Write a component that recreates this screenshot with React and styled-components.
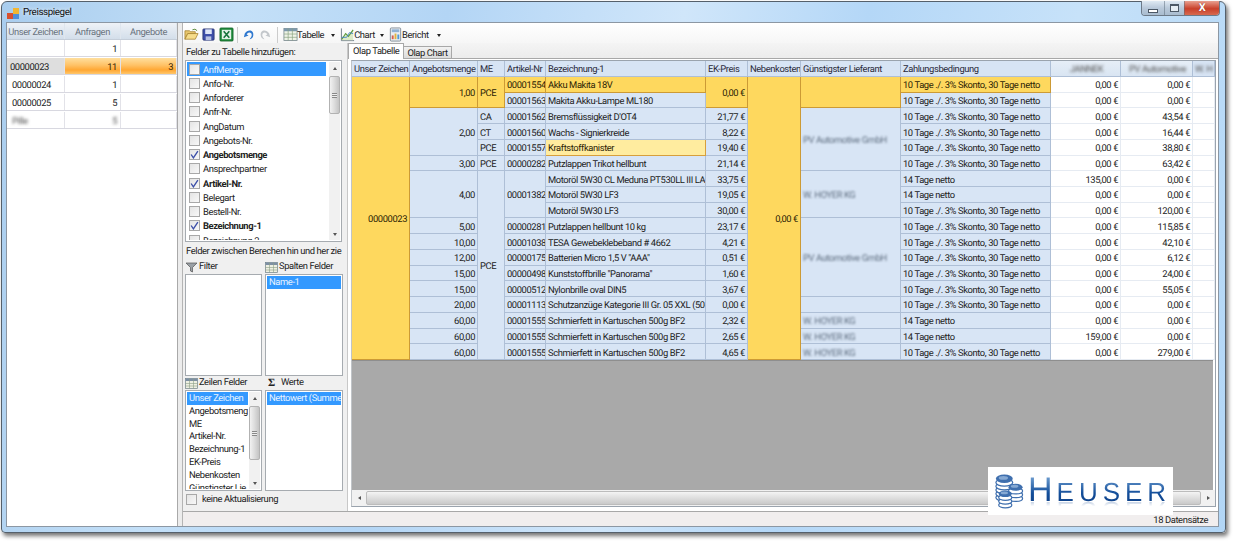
import React from 'react';
import styled, { createGlobalStyle } from 'styled-components';

const GlobalStyle = createGlobalStyle`
  html, body {
    margin: 0;
    padding: 0;
    background: #fff;
    overflow: hidden;
  }
  body {
    font-family: Roboto, "Liberation Sans", Arial, sans-serif;
    font-size: 9.4px;
    letter-spacing: -0.4px;
    text-rendering: geometricPrecision;
    color: #222;
  }
`;

const Page = styled.div`
  width: 1234px;
  height: 543px;
  padding: 1px 0 0 1px;
  box-sizing: border-box;
`;

const Window = styled.div`
  width: 1225px;
  height: 532px;
  box-sizing: border-box;
  display: flex;
  flex-direction: column;
  padding: 0 6px 5px 4px;
  border: 1px solid #55606b;
  border-radius: 6px 6px 4px 4px;
  background: linear-gradient(100deg, #a9cdee 0%, #c4e0f8 18%, #b3d5f5 34%, #d0e6fa 52%, #b4d7f7 66%, #c7e2f9 82%, #b2d6f6 100%);
  box-shadow: 2px 3px 4px rgba(0, 0, 0, 0.55);
`;

const TitleBar = styled.div`
  height: 20px;
  flex: none;
  display: flex;
  align-items: flex-start;
  gap: 3px;
`;

const TitleIcon = styled.svg`
  width: 13px;
  height: 13px;
  margin: 5px 0 0 1px;
`;

const TitleText = styled.span`
  font-size: 9.8px;
  line-height: 21px;
  color: #111;
  text-shadow: 0 0 4px #fff;
`;

const WindowControls = styled.div`
  margin-left: auto;
  margin-right: -1px;
  margin-top: -1px;
  height: 14px;
  display: flex;
  border: 1px solid #6d7a88;
  border-top: 0;
  border-radius: 0 0 4px 4px;
  overflow: hidden;
`;

const ControlButton = styled.div`
  width: ${p => p.$w}px;
  display: flex;
  align-items: center;
  justify-content: center;
  border-left: 1px solid rgba(90, 105, 120, 0.5);
  background: ${p => (p.$close
    ? 'linear-gradient(#e8a08f, #c9402a 55%, #d76a50)'
    : 'linear-gradient(#dfe9f3, #b9c9da 50%, #a9bccf)')};
  color: ${p => (p.$close ? '#fff' : '#445')};
  &:first-child {
    border-left: 0;
  }
`;

const MinGlyph = styled.div`
  width: 8px;
  height: 2px;
  margin-top: 5px;
  border: 1px solid #4c5866;
  background: #fff;
`;

const MaxGlyph = styled.div`
  width: 7px;
  height: 5px;
  border: 1px solid #4c5866;
  border-top-width: 2px;
  background: #e6edf4;
`;

const CloseGlyph = styled.span`
  font-size: 11px;
  font-weight: bold;
  line-height: 12px;
  text-shadow: 0 0 1px #6a1a10;
`;

const Client = styled.div`
  flex: 1;
  min-height: 0;
  display: flex;
  border: 1px solid #8c97a3;
  background: #f0f0f0;
`;

const LeftPanel = styled.div`
  width: 170px;
  flex: none;
  background: #fff;
  border-right: 1px solid #a9a9a9;
`;

const LeftHeader = styled.div`
  display: grid;
  grid-template-columns: 58px 56px 56px;
  height: 17px;
  box-sizing: border-box;
  background: linear-gradient(#eef2f7, #d3deea);
  border-bottom: 1px solid #c5ced9;
`;

const LeftHeaderCell = styled.div`
  display: flex;
  align-items: center;
  justify-content: center;
  padding-top: 2px;
  box-sizing: border-box;
  white-space: nowrap;
  color: #6a7480;
  border-right: 1px solid #dfe6ee;
`;

const LeftRow = styled.div`
  display: grid;
  grid-template-columns: 58px 56px 56px;
  height: 16px;
  margin-bottom: 2px;
  box-shadow: 0 1px 0 #d8d8e0;
`;

const LeftCell = styled.div`
  display: flex;
  align-items: center;
  justify-content: ${p => (p.$right ? 'flex-end' : 'flex-start')};
  padding: 2px 3px 0;
  overflow: hidden;
  border-right: 1px solid #e2e2e8;
  color: ${p => (p.$selected ? '#3a2500' : '#222')};
  background: ${p => {
    if (p.$key) return '#dedede';
    if (p.$selected) return 'linear-gradient(#ffdf9e, #ffc266 45%, #ffa733 75%, #ffc76c)';
    return '#fff';
  }};
  padding-left: ${p => (p.$key ? 3 : 5)}px;
`;

const Blurred = styled.span`
  filter: blur(${p => p.$r || 1.4}px);
  color: ${p => p.$color || '#555'};
  white-space: nowrap;
`;

const Splitter = styled.div`
  width: 4px;
  flex: none;
  background: #ececec;
  border-right: 1px solid #b4b4b4;
`;

const Main = styled.div`
  flex: 1;
  min-width: 0;
  display: flex;
  flex-direction: column;
`;

const Toolbar = styled.div`
  height: 20px;
  flex: none;
  display: flex;
  align-items: center;
  padding: 3px 0 0 1px;
  box-sizing: border-box;
  background: linear-gradient(#fff, #f6f6f6);
`;

const ToolIcon = styled.svg`
  width: 15px;
  height: 15px;
  flex: none;
  margin-right: ${p => p.$gap || 0}px;
`;

const ToolSep = styled.div`
  width: 1px;
  height: 16px;
  background: #ccc;
  margin: 0 ${p => p.$after}px 0 ${p => p.$before}px;
`;

const ToolLabel = styled.span`
  margin-left: -1px;
  padding-top: 1px;
`;

const Caret = styled.span`
  width: 0;
  height: 0;
  border: 2.5px solid transparent;
  border-top: 3px solid #222;
  border-bottom: 0;
  margin: 1px ${p => p.$after}px 0 ${p => p.$before}px;
`;

const Body = styled.div`
  flex: 1;
  min-height: 0;
  display: flex;
`;

const FieldPanel = styled.div`
  width: 165px;
  flex: none;
  box-sizing: border-box;
  padding: 2px 5px 0 2px;
  display: flex;
  flex-direction: column;
  background: #f0f0f0;
  border-right: 1px solid #c8c8c8;
`;

const FieldLabel = styled.div`
  height: ${p => p.$h || 15}px;
  line-height: ${p => (p.$h || 15) + 1}px;
  padding-left: 1px;
  white-space: nowrap;
  overflow: hidden;
  flex: none;
`;

const ListFrame = styled.div`
  height: ${p => p.$h}px;
  flex: none;
  box-sizing: border-box;
  display: flex;
  background: #fff;
  border: 1px solid #a6abb0;
  overflow: hidden;
  padding: 1px;
`;

const ListItems = styled.div`
  flex: 1;
  min-width: 0;
  overflow: hidden;
`;

const ListRow = styled.div`
  height: ${p => p.$h || 12.8}px;
  line-height: ${p => (p.$h || 12.8) + 2}px;
  padding-left: 2px;
  white-space: nowrap;
  overflow: hidden;
  color: ${p => (p.$selected ? '#e8f3ff' : '#222')};
  background: ${p => (p.$selected ? '#3399ff' : 'transparent')};
`;

const CheckRow = styled.div`
  height: 14.25px;
  display: flex;
  align-items: center;
  gap: 3px;
  padding-left: 2px;
  white-space: nowrap;
  font-weight: ${p => (p.$checked ? 'bold' : 'normal')};
  color: ${p => (p.$selected ? '#e8f3ff' : '#222')};
  background: ${p => (p.$selected ? '#3399ff' : 'transparent')};
`;

const CheckLabel = styled.span`
  padding-top: 2px;
`;

const CheckBox = styled.div`
  width: 9px;
  height: 9px;
  flex: none;
  display: flex;
  align-items: center;
  justify-content: center;
  border: 1px solid #a8a8a8;
  background: linear-gradient(135deg, #e4e4e4, #f8f8f8);
`;

const ScrollBar = styled.div`
  width: 11px;
  flex: none;
  display: flex;
  flex-direction: column;
  background: #f1f1f1;
  margin-left: ${p => p.$gap || 0}px;
`;

const ScrollArrow = styled.div`
  height: 12px;
  flex: none;
  display: flex;
  align-items: center;
  justify-content: center;
  margin-top: ${p => (p.$down ? 'auto' : 0)};
  &::before {
    content: '';
    border: 2.5px solid transparent;
    ${p => (p.$down ? 'border-top: 3px solid #555; border-bottom: 0;' : 'border-bottom: 3px solid #555; border-top: 0;')}
  }
`;

const ScrollThumb = styled.div`
  height: ${p => p.$h}px;
  margin-top: ${p => p.$top}px;
  flex: none;
  box-sizing: border-box;
  border: 1px solid #b2b2b2;
  border-radius: 2px;
  background: linear-gradient(90deg, #f2f2f2, #dcdcdc 50%, #c4c4c4);
  display: flex;
  align-items: center;
  justify-content: center;
  &::after {
    content: '';
    width: 5px;
    height: 5px;
    background: repeating-linear-gradient(#888 0 1px, #eee 1px 2px);
  }
`;

const PairGrid = styled.div`
  display: grid;
  grid-template-columns: 77px 78px;
  column-gap: 3px;
  flex: none;
`;

const Caption = styled.div`
  height: 14px;
  display: flex;
  align-items: center;
  gap: 1px;
  line-height: 16px;
  white-space: nowrap;
`;

const CaptionIcon = styled.svg`
  width: 13px;
  height: 11px;
  flex: none;
`;

const Sigma = styled.span`
  width: 13px;
  text-align: center;
  font-weight: bold;
  font-size: 11px;
  font-family: "Liberation Serif", serif;
  margin-right: 2px;
`;

const FooterCheck = styled.div`
  height: 16px;
  display: flex;
  align-items: center;
  gap: 5px;
  padding-left: 1px;
`;

const TabArea = styled.div`
  flex: 1;
  min-width: 0;
  display: flex;
  flex-direction: column;
  background: #fff;
`;

const TabStrip = styled.div`
  height: 16px;
  flex: none;
  box-sizing: border-box;
  display: flex;
  align-items: flex-end;
  background: linear-gradient(#f4f4f4, #ececec);
  border-bottom: 1px solid #a8a8a8;
`;

const Tab = styled.div`
  height: ${p => (p.$active ? 16 : 13)}px;
  line-height: ${p => (p.$active ? 15 : 14)}px;
  padding: 0 ${p => (p.$active ? 4 : 3)}px;
  margin-bottom: -1px;
  box-sizing: border-box;
  border: 1px solid #a8a8a8;
  border-bottom: ${p => (p.$active ? '0' : '1px solid #a8a8a8')};
  border-left-width: ${p => (p.$active ? 1 : 0)}px;
  background: ${p => (p.$active ? '#fff' : 'linear-gradient(#f2f2f2, #dcdcdc)')};
`;

const TablePanel = styled.div`
  flex: 1;
  min-height: 0;
  position: relative;
  padding: 1px 2px 4px 3px;
`;

const TableFrame = styled.div`
  height: 100%;
  box-sizing: border-box;
  display: flex;
  flex-direction: column;
  border: 1px solid #9aa3ad;
  border-left-color: #c0c4c8;
`;

const Grid = styled.div`
  display: grid;
  flex: none;
  grid-template-columns: 58px 68px 27px 41px 160px 42px 53px 100px 150px 70px 72px 22px;
  grid-template-rows: 16px repeat(18, 15.72px);
  background: #fff;
  width: 863px;
`;

const HeadCell = styled.div`
  grid-column: ${p => p.$col};
  grid-row: 1;
  display: flex;
  align-items: center;
  justify-content: ${p => (p.$center ? 'center' : 'flex-start')};
  padding: 2px 0 0 2px;
  white-space: nowrap;
  overflow: hidden;
  box-sizing: border-box;
  color: #2a2a3a;
  background: ${p => (p.$center ? 'linear-gradient(#e6eef7, #d9e5f2)' : '#d7e4f4')};
  border-right: 1px solid #aebfd6;
  border-bottom: 1px solid #aebfd6;
`;

const tones = {
  blue: { bg: '#d8e5f5', line: '#aebfd6', color: '#222' },
  yellow: { bg: '#fed85e', line: '#cc9a35', color: '#2c2305' },
  pale: { bg: '#ffec9f', line: '#d79f3c', color: '#2c2305' },
  white: { bg: '#fff', line: '#e6ebf2', color: '#222' },
};

const Cell = styled.div`
  grid-column: ${p => p.$col};
  grid-row: ${p => p.$row + 1} / span ${p => p.$span || 1};
  display: flex;
  align-items: center;
  justify-content: ${p => (p.$right ? 'flex-end' : 'flex-start')};
  padding: 3px ${p => (p.$right ? 2 : 0)}px 0 ${p => (p.$right ? 0 : 2)}px;
  box-sizing: border-box;
  white-space: nowrap;
  overflow: hidden;
  min-width: 0;
  color: ${p => tones[p.$tone || 'blue'].color};
  background: ${p => tones[p.$tone || 'blue'].bg};
  border-right: 1px solid ${p => tones[p.$tone || 'blue'].line};
  border-bottom: 1px solid ${p => tones[p.$tone || 'blue'].line};
`;

const Gray = styled.div`
  flex: 1;
  min-height: 0;
  margin-right: 2px;
  background: #a9a9a9;
  border-top: 1px solid #8e8e8e;
`;

const HScroll = styled.div`
  height: 16px;
  flex: none;
  display: flex;
  align-items: center;
  background: #f1f1f1;
`;

const HArrow = styled.div`
  width: 14px;
  height: 100%;
  flex: none;
  display: flex;
  align-items: center;
  justify-content: center;
  &::before {
    content: '';
    border: 2.5px solid transparent;
    ${p => (p.$right ? 'border-left: 3px solid #555; border-right: 0;' : 'border-right: 3px solid #555; border-left: 0;')}
  }
`;

const HThumb = styled.div`
  flex: 1;
  height: 14px;
  box-sizing: border-box;
  border: 1px solid #bcbcbc;
  border-radius: 2px;
  background: linear-gradient(#f4f4f4, #dedede 50%, #c9c9c9);
`;

const StatusBar = styled.div`
  height: 15px;
  flex: none;
  box-sizing: border-box;
  display: flex;
  align-items: center;
  justify-content: flex-end;
  padding: 3px 10px 0 0;
  background: #f1eeee;
  border-top: 1px solid #a8a8a8;
`;

const Logo = styled.div`
  position: absolute;
  left: 640px;
  bottom: -4px;
  width: 185px;
  height: 48px;
  display: flex;
  align-items: center;
  gap: 4px;
  padding-left: 6px;
  box-sizing: border-box;
  background: #fff;
`;

const LogoMark = styled.svg`
  width: 30px;
  height: 36px;
  flex: none;
`;

const LogoText = styled.div`
  display: flex;
  align-items: baseline;
  height: 30px;
  margin-top: -2px;
  font-family: "Liberation Sans", Arial, sans-serif;
  letter-spacing: 0;
  color: #1b559c;
  background: linear-gradient(#6f9ed0 5%, #144f9b 60%, #0d3f86);
  -webkit-background-clip: text;
  background-clip: text;
  -webkit-text-fill-color: transparent;
  -webkit-box-reflect: below -7px linear-gradient(transparent 72%, rgba(255, 255, 255, 0.45));
`;

const LogoBig = styled.span`
  font-size: 34px;
  line-height: 30px;
  letter-spacing: 4px;
`;

const LogoSmall = styled.span`
  font-size: 26px;
  line-height: 30px;
  letter-spacing: 5px;
`;

const TICK = 'M1 4 L3 7 L7 1';

const Tick = () => (
  <svg width="9" height="9" viewBox="0 0 8 8">
    <path d={TICK} fill="none" stroke="#3c4fa8" strokeWidth="1.2" />
  </svg>
);

const FolderIcon = () => (
  <ToolIcon viewBox="0 0 16 16" $gap={2}>
    <path d="M1 13 V4 H6 L7 5 H12 V7 H4 Z" fill="#e8c66e" stroke="#a47f2a" strokeWidth="0.8" />
    <path d="M1 13 L4 7 H15 L12 13 Z" fill="#f6dc8a" stroke="#a47f2a" strokeWidth="0.8" />
    <path d="M9 3 Q12 1 14 4" fill="none" stroke="#5a8a3a" strokeWidth="1" />
  </ToolIcon>
);

const SaveIcon = () => (
  <ToolIcon viewBox="0 0 16 16" $gap={3}>
    <rect x="2" y="2" width="12" height="12" rx="1" fill="#3d4ea8" stroke="#26316e" strokeWidth="0.8" />
    <rect x="4.5" y="2.5" width="7" height="5" fill="#dfe6f7" />
    <rect x="5" y="10" width="6" height="4" fill="#b9c2e2" />
  </ToolIcon>
);

const ExcelIcon = () => (
  <ToolIcon viewBox="0 0 16 16">
    <rect x="1" y="1" width="14" height="14" rx="1" fill="#1f8a3c" stroke="#136127" strokeWidth="0.8" />
    <rect x="3" y="3" width="10" height="10" fill="#e4f2e6" />
    <path d="M5 4.5 L11 11.5 M11 4.5 L5 11.5" stroke="#16743a" strokeWidth="1.7" />
  </ToolIcon>
);

const UndoIcon = () => (
  <ToolIcon viewBox="0 0 16 16">
    <path d="M3 7 C6 2 13 3 12 9 C12 11 10 13 8 13 C10 11 11 9 10 7 C8 5 6 6 5 8 L7 9 L2 11 Z" fill="#2f78cf" />
  </ToolIcon>
);

const RedoIcon = () => (
  <ToolIcon viewBox="0 0 16 16">
    <path d="M13 7 C10 2 3 3 4 9 C4 11 6 13 8 13 C6 11 5 9 6 7 C8 5 10 6 11 8 L9 9 L14 11 Z" fill="#c3c7cb" />
  </ToolIcon>
);

const TableIcon = () => (
  <ToolIcon viewBox="0 0 16 16">
    <rect x="1" y="1.5" width="14" height="13" fill="#eef3e6" stroke="#6f7f86" strokeWidth="0.8" />
    <rect x="1" y="1.5" width="14" height="3" fill="#7d99ad" />
    <path d="M5.5 1.5 V14.5 M10 1.5 V14.5 M1 7.5 H15 M1 11 H15" stroke="#86a07e" strokeWidth="0.7" />
  </ToolIcon>
);

const ChartIcon = () => (
  <ToolIcon viewBox="0 0 16 16">
    <path d="M1.5 1.5 V14.5 H15" fill="none" stroke="#6d7a88" strokeWidth="1" />
    <path d="M2 13 L6 7 L9 10 L14 3 V14 H2 Z" fill="#dcebc8" />
    <path d="M2 13 L6 7 L9 10 L14 3" fill="none" stroke="#5c9a3a" strokeWidth="1.2" />
    <path d="M2 11 L7 11 L10 6 L14 7" fill="none" stroke="#3d7fc4" strokeWidth="0.9" />
  </ToolIcon>
);

const ReportIcon = () => (
  <ToolIcon viewBox="0 0 16 16">
    <rect x="2.5" y="1" width="11" height="14" rx="1" fill="#e9eef2" stroke="#77838e" strokeWidth="0.9" />
    <rect x="4" y="2.5" width="8" height="3" fill="#8fb2d4" />
    <rect x="4" y="9" width="2" height="4" fill="#d65f4d" />
    <rect x="7" y="7" width="2" height="6" fill="#e2b43f" />
    <rect x="10" y="8" width="2" height="5" fill="#4f9bd6" />
  </ToolIcon>
);

const FunnelIcon = () => (
  <CaptionIcon viewBox="0 0 13 11">
    <path d="M1 1 H12 L7.5 5.5 V10 L5.5 9 V5.5 Z" fill="#9aa0a6" stroke="#555" strokeWidth="0.7" />
  </CaptionIcon>
);

const GridIcon = () => (
  <CaptionIcon viewBox="0 0 13 11">
    <rect x="0.5" y="0.5" width="12" height="10" fill="#eef0e2" stroke="#6f7f86" strokeWidth="0.7" />
    <rect x="0.5" y="0.5" width="12" height="2.5" fill="#7d8fa3" />
    <path d="M4.5 0.5 V10.5 M8.5 0.5 V10.5 M0.5 5.5 H12.5 M0.5 8 H12.5" stroke="#8da088" strokeWidth="0.6" />
  </CaptionIcon>
);

const Coins = ({ cx, cy, rx, layers }) => (
  <g>
    {Array.from({ length: layers }, (_, i) => (
      <ellipse
        key={i}
        cx={cx}
        cy={cy + (layers - i) * 4}
        rx={rx}
        ry={rx * 0.42}
        fill="#fff"
        stroke="#3f6fae"
        strokeWidth="1.3"
      />
    ))}
    <ellipse cx={cx} cy={cy} rx={rx} ry={rx * 0.5} fill="#3f6fae" />
    <ellipse cx={cx - 1} cy={cy - 1} rx={rx * 0.55} ry={rx * 0.22} fill="#86a9d3" />
  </g>
);

const HeuserMark = () => (
  <LogoMark viewBox="0 0 32 38">
    <Coins cx={11} cy={6} rx={9} layers={5} />
    <Coins cx={23} cy={15} rx={7.5} layers={3} />
    <Coins cx={12} cy={22} rx={7} layers={3} />
  </LogoMark>
);

const leftRows = [
  { code: '', requests: '1', offers: '' },
  { code: '00000023', requests: '11', offers: '3', selected: true },
  { code: '00000024', requests: '1', offers: '' },
  { code: '00000025', requests: '5', offers: '' },
  { code: 'Pille', requests: '5', offers: '', blurred: true },
];

const checkFields = [
  ['AnfMenge', false, true],
  ['Anfo-Nr.'],
  ['Anforderer'],
  ['Anfr-Nr.'],
  ['AngDatum'],
  ['Angebots-Nr.'],
  ['Angebotsmenge', true],
  ['Ansprechpartner'],
  ['Artikel-Nr.', true],
  ['Belegart'],
  ['Bestell-Nr.'],
  ['Bezeichnung-1', true],
  ['Bezeichnung-2'],
];

const rowFields = ['Unser Zeichen', 'Angebotsmeng', 'ME', 'Artikel-Nr.', 'Bezeichnung-1', 'EK-Preis', 'Nebenkosten', 'Günstigster Lie'];

const headers = ['Unser Zeichen', 'Angebotsmenge', 'ME', 'Artikel-Nr', 'Bezeichnung-1', 'EK-Preis', 'Nebenkosten', 'Günstigster Lieferant', 'Zahlungsbedingung'];

const SKONTO = '10 Tage ./. 3% Skonto, 30 Tage netto';
const NETTO = '14 Tage netto';

const amounts = [
  ['1,00', 1, 2, 'yellow'], ['2,00', 3, 3], ['3,00', 6, 1], ['4,00', 7, 3], ['5,00', 10, 1], ['10,00', 11, 1],
  ['12,00', 12, 1], ['15,00', 13, 1], ['15,00', 14, 1], ['20,00', 15, 1], ['60,00', 16, 1], ['60,00', 17, 1], ['60,00', 18, 1],
];

const units = [['PCE', 1, 2, 'yellow'], ['CA', 3, 1], ['CT', 4, 1], ['PCE', 5, 1], ['PCE', 6, 1], ['PCE', 7, 12]];

const articles = [
  ['00001554', 1, 1, 'yellow'], ['00001563', 2, 1], ['00001562', 3, 1], ['00001560', 4, 1], ['00001557', 5, 1], ['00000282', 6, 1],
  ['00001382', 7, 3], ['00000281', 10, 1], ['00001038', 11, 1], ['00000175', 12, 1], ['00000498', 13, 1], ['00000512', 14, 1],
  ['00001113', 15, 1], ['00001555', 16, 1], ['00001555', 17, 1], ['00001555', 18, 1],
];

const names = [
  ['Akku Makita 18V', 'yellow'], ['Makita Akku-Lampe ML180'], ['Bremsflüssigkeit D\'OT4'], ['Wachs - Signierkreide'],
  ['Kraftstoffkanister', 'pale'], ['Putzlappen Trikot hellbunt'], ['Motoröl 5W30 CL Meduna PT530LL III LA'], ['Motoröl 5W30 LF3'],
  ['Motoröl 5W30 LF3'], ['Putzlappen hellbunt 10 kg'], ['TESA Gewebeklebeband # 4662'], ['Batterien Micro 1,5 V "AAA"'],
  ['Kunststoffbrille "Panorama"'], ['Nylonbrille oval DIN5'], ['Schutzanzüge Kategorie III Gr. 05 XXL (50-'],
  ['Schmierfett in Kartuschen 500g BF2'], ['Schmierfett in Kartuschen 500g BF2'], ['Schmierfett in Kartuschen 500g BF2'],
];

const prices = [
  ['0,00 €', 1, 2, 'yellow'], ['21,77 €', 3, 1], ['8,22 €', 4, 1], ['19,40 €', 5, 1], ['21,14 €', 6, 1], ['33,75 €', 7, 1],
  ['19,05 €', 8, 1], ['30,00 €', 9, 1], ['23,17 €', 10, 1], ['4,21 €', 11, 1], ['0,51 €', 12, 1], ['1,60 €', 13, 1],
  ['3,67 €', 14, 1], ['0,00 €', 15, 1], ['2,32 €', 16, 1], ['2,65 €', 17, 1], ['4,65 €', 18, 1],
];

const suppliers = [
  ['', 1, 2, 'yellow'], ['PV Automotive GmbH', 3, 4], ['W. HOYER KG', 7, 3], ['PV Automotive GmbH', 10, 5], ['', 15, 1],
  ['W. HOYER KG', 16, 1], ['W. HOYER KG', 17, 1], ['W. HOYER KG', 18, 1],
];

const terms = [
  SKONTO, SKONTO, SKONTO, SKONTO, SKONTO, SKONTO, NETTO, NETTO, SKONTO, SKONTO, SKONTO, SKONTO, SKONTO, SKONTO, SKONTO, NETTO, NETTO, SKONTO,
];

const firstVendor = ['0,00', '0,00', '0,00', '0,00', '0,00', '0,00', '135,00', '0,00', '0,00', '0,00', '0,00', '0,00', '0,00', '0,00', '0,00', '0,00', '159,00', '0,00'];
const secondVendor = ['0,00', '0,00', '43,54', '16,44', '38,80', '63,42', '0,00', '0,00', '120,00', '115,85', '42,10', '6,12', '24,00', '55,05', '0,00', '0,00', '0,00', '279,00'];

const PivotGrid = () => (
  <Grid>
    {headers.map((label, i) => (
      <HeadCell key={label} $col={i + 1}>{label}</HeadCell>
    ))}
    <HeadCell $col={10} $center><Blurred $r={1.5}>JANNEK</Blurred></HeadCell>
    <HeadCell $col={11} $center><Blurred $r={1.5}>PV Automotive</Blurred></HeadCell>
    <HeadCell $col={12}><Blurred $r={1.5}>W. H</Blurred></HeadCell>

    <Cell $col={1} $row={1} $span={18} $tone="yellow" $right>00000023</Cell>
    {amounts.map(([value, row, span, tone]) => (
      <Cell key={row} $col={2} $row={row} $span={span} $tone={tone} $right>{value}</Cell>
    ))}
    {units.map(([value, row, span, tone]) => (
      <Cell key={row} $col={3} $row={row} $span={span} $tone={tone}>{value}</Cell>
    ))}
    {articles.map(([value, row, span, tone]) => (
      <Cell key={row} $col={4} $row={row} $span={span} $tone={tone}>{value}</Cell>
    ))}
    {names.map(([value, tone], i) => (
      <Cell key={i} $col={5} $row={i + 1} $tone={tone}>{value}</Cell>
    ))}
    {prices.map(([value, row, span, tone]) => (
      <Cell key={row} $col={6} $row={row} $span={span} $tone={tone} $right>{value}</Cell>
    ))}
    <Cell $col={7} $row={1} $span={18} $tone="yellow" $right>0,00 €</Cell>
    {suppliers.map(([value, row, span, tone]) => (
      <Cell key={row} $col={8} $row={row} $span={span} $tone={tone}>
        {value && <Blurred $r={1.3} $color="#5f6e80">{value}</Blurred>}
      </Cell>
    ))}
    {terms.map((value, i) => (
      <Cell key={i} $col={9} $row={i + 1} $tone={i === 0 ? 'yellow' : 'blue'}>{value}</Cell>
    ))}
    {firstVendor.map((value, i) => (
      <Cell key={i} $col={10} $row={i + 1} $tone="white" $right>{value} €</Cell>
    ))}
    {secondVendor.map((value, i) => (
      <Cell key={i} $col={11} $row={i + 1} $tone="white" $right>{value} €</Cell>
    ))}
    {terms.map((_, i) => (
      <Cell key={i} $col={12} $row={i + 1} $tone="white" />
    ))}
  </Grid>
);

const App = () => (
  <Page>
    <GlobalStyle />
    <Window>
      <TitleBar>
        <TitleIcon viewBox="0 0 13 13">
          <rect x="0" y="6" width="6" height="6" fill="#d8502f" />
          <rect x="6" y="1" width="6" height="6" fill="#f2b632" />
          <rect x="6" y="7" width="6" height="5" fill="#4f8fd8" />
        </TitleIcon>
        <TitleText>Preisspiegel</TitleText>
        <WindowControls>
          <ControlButton $w={22}><MinGlyph /></ControlButton>
          <ControlButton $w={19}><MaxGlyph /></ControlButton>
          <ControlButton $w={34} $close><CloseGlyph>X</CloseGlyph></ControlButton>
        </WindowControls>
      </TitleBar>
      <Client>
        <LeftPanel>
          <LeftHeader>
            <LeftHeaderCell>Unser Zeichen</LeftHeaderCell>
            <LeftHeaderCell>Anfragen</LeftHeaderCell>
            <LeftHeaderCell>Angebote</LeftHeaderCell>
          </LeftHeader>
          {leftRows.map(row => (
            <LeftRow key={row.code + row.requests}>
              <LeftCell $key={row.selected}>
                {row.blurred ? <Blurred>{row.code}</Blurred> : row.code}
              </LeftCell>
              <LeftCell $right $selected={row.selected}>
                {row.blurred ? <Blurred>{row.requests}</Blurred> : row.requests}
              </LeftCell>
              <LeftCell $right $selected={row.selected}>{row.offers}</LeftCell>
            </LeftRow>
          ))}
        </LeftPanel>
        <Splitter />
        <Main>
          <Toolbar>
            <FolderIcon />
            <SaveIcon />
            <ExcelIcon />
            <ToolSep $before={3} $after={4} />
            <UndoIcon />
            <RedoIcon />
            <ToolSep $before={5} $after={5} />
            <TableIcon />
            <ToolLabel>Tabelle</ToolLabel>
            <Caret $before={7} $after={5} />
            <ChartIcon />
            <ToolLabel>Chart</ToolLabel>
            <Caret $before={5} $after={4} />
            <ReportIcon />
            <ToolLabel>Bericht</ToolLabel>
            <Caret $before={8} $after={0} />
          </Toolbar>
          <Body>
            <FieldPanel>
              <FieldLabel>Felder zu Tabelle hinzufügen:</FieldLabel>
              <ListFrame $h={182}>
                <ListItems>
                  {checkFields.map(([label, checked, selected]) => (
                    <CheckRow key={label} $checked={checked} $selected={selected}>
                      <CheckBox>{checked && <Tick />}</CheckBox>
                      <CheckLabel>{label}</CheckLabel>
                    </CheckRow>
                  ))}
                </ListItems>
                <ScrollBar $gap={3}>
                  <ScrollArrow />
                  <ScrollThumb $top={2} $h={38} />
                  <ScrollArrow $down />
                </ScrollBar>
              </ListFrame>
              <FieldLabel $h={18}>Felder zwischen Berechen hin und her zie</FieldLabel>
              <PairGrid>
                <Caption><FunnelIcon />Filter</Caption>
                <Caption><GridIcon />Spalten Felder</Caption>
                <ListFrame $h={102} />
                <ListFrame $h={102}>
                  <ListItems>
                    <ListRow $selected>Name-1</ListRow>
                  </ListItems>
                </ListFrame>
                <Caption><GridIcon />Zeilen Felder</Caption>
                <Caption><Sigma>Σ</Sigma>Werte</Caption>
                <ListFrame $h={101}>
                  <ListItems>
                    {rowFields.map((label, i) => (
                      <ListRow key={label} $selected={i === 0}>{label}</ListRow>
                    ))}
                  </ListItems>
                  <ScrollBar $gap={1}>
                    <ScrollArrow />
                    <ScrollThumb $top={2} $h={54} />
                    <ScrollArrow $down />
                  </ScrollBar>
                </ListFrame>
                <ListFrame $h={101}>
                  <ListItems>
                    <ListRow $selected>Nettowert (Summe</ListRow>
                  </ListItems>
                </ListFrame>
              </PairGrid>
              <FooterCheck>
                <CheckBox />
                keine Aktualisierung
              </FooterCheck>
            </FieldPanel>
            <TabArea>
              <TabStrip>
                <Tab $active>Olap Tabelle</Tab>
                <Tab>Olap Chart</Tab>
              </TabStrip>
              <TablePanel>
                <TableFrame>
                  <PivotGrid />
                  <Gray />
                  <HScroll>
                    <HArrow />
                    <HThumb />
                    <HArrow $right />
                  </HScroll>
                </TableFrame>
                <Logo>
                  <HeuserMark />
                  <LogoText>
                    <LogoBig>H</LogoBig>
                    <LogoSmall>EUSER</LogoSmall>
                  </LogoText>
                </Logo>
              </TablePanel>
            </TabArea>
          </Body>
          <StatusBar>18 Datensätze</StatusBar>
        </Main>
      </Client>
    </Window>
  </Page>
);

export default App;
